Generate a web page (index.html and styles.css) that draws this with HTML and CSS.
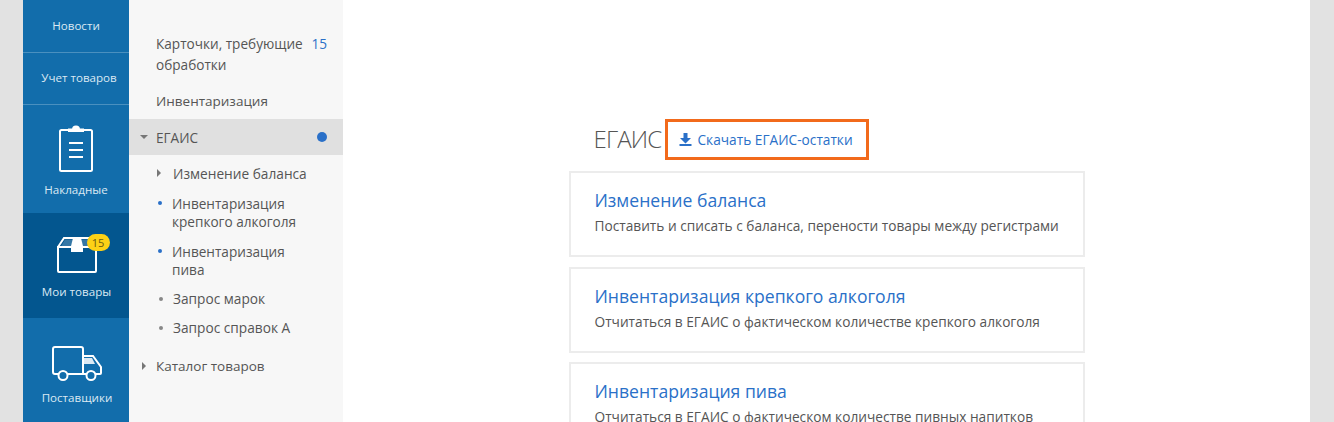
FILE: index.html
```html
<!DOCTYPE html>
<html lang="ru">
<head>
    <meta charset="UTF-8">
    <title>ЕГАИС</title>
    <link rel="stylesheet" href="styles.css">
</head>
<body>
    <div class="page">
        <!-- Main navigation -->
        <nav class="nav">
            <a class="nav-item nav-small nav-first">Новости</a>
            <a class="nav-item nav-small nav-second">Учет товаров</a>
            <a class="nav-item nav-invoices">
                <svg class="nav-icon" width="36" height="48" viewBox="0 0 36 48" fill="none" stroke="#fff" stroke-width="2">
                    <rect x="2" y="6" width="32" height="41" rx="1.5"/>
                    <path d="M11 7V5.500h4a3 3 0 0 1 6 0h4V7z" fill="#fff"/>
                    <path d="M11 19h14M11 26h14M11 33h14"/>
                </svg>
                <span>Накладные</span>
            </a>
            <a class="nav-item nav-goods active">
                <span class="nav-icon-wrap">
                    <svg class="nav-icon" width="40" height="36" viewBox="0 0 40 36" fill="none" stroke="#fff" stroke-width="2">
                        <path d="M1 10V34a1 1 0 0 0 1 1h36a1 1 0 0 0 1-1V10z"/>
                        <path d="M1 10L7 1h26L39 10"/>
                        <path d="M16 1h8l2 8v6h-12v-6z" fill="#fff" stroke="none"/>
                        <path d="M4 9.500l4-7h8l-2 7zM36 9.500l-4-7h-8l2 7z" fill="#fff" fill-opacity="0.2" stroke="none"/>
                    </svg>
                    <span class="badge">15</span>
                </span>
                <span>Мои товары</span>
            </a>
            <a class="nav-item nav-suppliers">
                <svg class="nav-icon" width="50" height="36" viewBox="0 0 50 36" fill="none" stroke="#fff" stroke-width="2">
                    <path d="M6 28H3a2 2 0 0 1-2-2V3a2 2 0 0 1 2-2h26a2 2 0 0 1 2 2v25H16"/>
                    <path d="M31 10h10l8 11v6a1 1 0 0 1-1 1h-4M34 28h-3"/>
                    <path d="M32 12h8l3 6h-11z" fill="#fff" fill-opacity="0.85" stroke="none"/>
                    <circle cx="11" cy="29.500" r="4.500"/>
                    <circle cx="39" cy="29.500" r="4.500"/>
                </svg>
                <span>Поставщики</span>
            </a>
        </nav>

        <!-- Section menu -->
        <aside class="menu">
            <div class="menu-row menu-cards">
                <span>Карточки, требующие обработки</span>
                <span class="menu-count">15</span>
            </div>
            <div class="menu-row menu-inventory">Инвентаризация</div>
            <div class="menu-row menu-open">
                <i class="arrow-down"></i>
                <span>ЕГАИС</span>
                <i class="menu-dot"></i>
            </div>
            <ul class="submenu">
                <li class="sub-single"><i class="arrow-right"></i>Изменение баланса</li>
                <li class="sub-double"><i class="bullet bullet-blue"></i>Инвентаризация<br>крепкого алкоголя</li>
                <li class="sub-double"><i class="bullet bullet-blue"></i>Инвентаризация<br>пива</li>
                <li class="sub-single"><i class="bullet"></i>Запрос марок</li>
                <li class="sub-single"><i class="bullet"></i>Запрос справок А</li>
            </ul>
            <div class="menu-row menu-catalog">
                <i class="arrow-right"></i>
                <span>Каталог товаров</span>
            </div>
        </aside>

        <!-- Content -->
        <main class="main">
            <div class="content">
                <div class="title-row">
                    <h1>ЕГАИС</h1>
                    <a class="download">
                        <svg width="13" height="13" viewBox="0 0 13 13" fill="#2a70c8">
                            <path d="M4.500 0h4v5h3.500l-5.500 5.500L1 5h3.500z"/>
                            <rect x="0.500" y="11" width="12" height="2"/>
                        </svg>
                        Скачать ЕГАИС-остатки
                    </a>
                </div>
                <a class="card">
                    <h2>Изменение баланса</h2>
                    <p>Поставить и списать с баланса, перености товары между регистрами</p>
                </a>
                <a class="card">
                    <h2>Инвентаризация крепкого алкоголя</h2>
                    <p>Отчитаться в ЕГАИС о фактическом количестве крепкого алкоголя</p>
                </a>
                <a class="card">
                    <h2>Инвентаризация пива</h2>
                    <p>Отчитаться в ЕГАИС о фактическом количестве пивных напитков</p>
                </a>
            </div>
        </main>
    </div>
</body>
</html>
```

FILE: styles.css
```css
/* Global */
html, body {
    margin: 0;
    padding: 0;
    height: 422px;
    overflow: hidden;
}

body {
    background: #e2e2e2;
    font-family: "Open Sans", "Noto Sans", sans-serif;
    color: #555;
}

.page {
    display: flex;
    height: 422px;
    margin: 0 24px 0 23px;
    overflow: hidden;
}

/* Main navigation */
.nav {
    flex: 0 0 106px;
    background: #126dab;
    color: #dbe9f3;
    font-size: 11.600px;
    text-align: center;
}

.nav-item {
    display: flex;
    flex-direction: column;
    align-items: center;
    box-sizing: border-box;
}

.nav-small {
    justify-content: center;
    border-bottom: 1px solid #4a90bf;
}

.nav-first {
    height: 53px;
    padding-bottom: 2px;
}

.nav-second {
    height: 52px;
    padding-bottom: 2px;
    padding-left: 6px;
}

.nav-invoices {
    height: 108px;
    padding-top: 19px;
}

.nav-goods {
    height: 105px;
    padding-top: 24px;
    padding-left: 1px;
}

.nav-suppliers {
    height: 105px;
    padding-top: 28px;
    padding-left: 2px;
}

.nav-invoices span {
    margin-top: 10px;
}

.nav-suppliers span {
    margin-top: 8px;
}

.nav-goods > span:last-child {
    margin-top: 11px;
}

.nav-goods.active {
    background: #03568f;
}

.nav-icon {
    display: block;
}

.nav-icon-wrap {
    position: relative;
    display: block;
}

.badge {
    position: absolute;
    top: -3px;
    right: -13px;
    width: 23px;
    height: 17px;
    border-radius: 9px;
    background: #fcd116;
    color: #6a5a10;
    font-size: 11px;
    line-height: 17px;
    text-align: center;
}

/* Section menu */
.menu {
    flex: 0 0 214px;
    background: #f7f7f7;
    font-size: 13.600px;
    line-height: 21px;
    padding-top: 33px;
}

.menu-row {
    display: flex;
    padding-left: 27px;
}

.menu-cards {
    justify-content: space-between;
    padding-right: 16px;
}

.menu-cards span:first-child {
    width: 150px;
}

.menu-count {
    color: #2a70c8;
}

.menu-inventory {
    margin-top: 16px;
    font-size: 13.500px;
}

.menu-open {
    align-items: center;
    position: relative;
    height: 36px;
    margin-top: 7px;
    background: #e0e0e0;
}

.arrow-down {
    position: absolute;
    left: 11px;
    top: 16px;
    border-left: 4px solid transparent;
    border-right: 4px solid transparent;
    border-top: 4px solid #777;
}

.menu-dot {
    position: absolute;
    right: 16px;
    top: 13px;
    width: 10px;
    height: 10px;
    border-radius: 50%;
    background: #2a70c8;
}

.arrow-right {
    position: absolute;
    left: -15px;
    top: 6px;
    border-top: 4px solid transparent;
    border-bottom: 4px solid transparent;
    border-left: 4px solid #777;
}

.submenu {
    list-style: none;
    margin: 0;
    padding: 0 0 0 43px;
}

.submenu li {
    position: relative;
}

.sub-single {
    padding-top: 8px;
    padding-left: 1px;
    font-size: 13.700px;
}

.sub-single .arrow-right {
    top: 14px;
}

.sub-double {
    line-height: 18px;
    padding-top: 11px;
    padding-bottom: 1px;
}

.bullet {
    position: absolute;
    left: -14px;
    top: 17px;
    width: 4px;
    height: 4px;
    border-radius: 50%;
    background: #888;
}

.sub-single .bullet {
    left: -13px;
}

.bullet-blue {
    background: #2a70c8;
}

.menu-catalog {
    position: relative;
    margin-top: 18px;
    font-size: 13.500px;
}

.menu-catalog .arrow-right {
    left: 13px;
}

/* Content */
.main {
    flex: 1;
    background: #fff;
}

.content {
    width: 516px;
    margin: 0 auto;
    padding-top: 119px;
}

.title-row {
    display: flex;
    align-items: center;
    height: 41px;
    padding-left: 25px;
    margin-bottom: 11px;
}

h1 {
    margin: 0 0 3px;
    width: 71px;
    font-size: 24px;
    font-weight: 300;
    letter-spacing: -0.800px;
    color: #555;
}

.download {
    display: flex;
    align-items: center;
    gap: 6px;
    box-sizing: border-box;
    width: 204px;
    height: 41px;
    padding-left: 11px;
    border: 3px solid #f26a1b;
    color: #2a70c8;
    font-size: 13.700px;
}

.card {
    display: block;
    box-sizing: border-box;
    height: 86px;
    margin-bottom: 9.500px;
    padding: 14px 10px 14px 24px;
    border: 2px solid #ececec;
}

h2 {
    margin: 0;
    font-size: 17.600px;
    font-weight: 400;
    line-height: 26px;
    color: #2a70c8;
}

.card p {
    margin: 2px 0 0;
    font-size: 13.700px;
    line-height: 22px;
}
```
